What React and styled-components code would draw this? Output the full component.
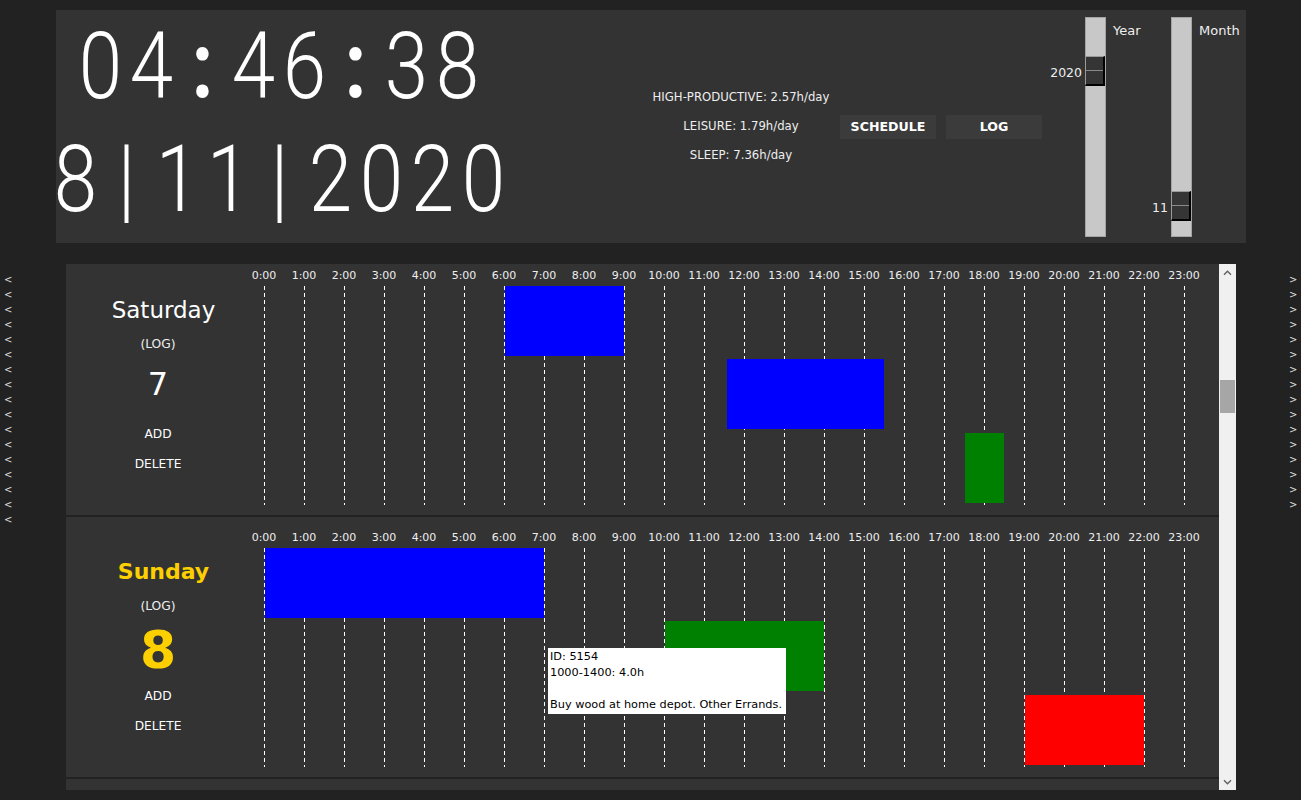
import React, { useLayoutEffect, useRef } from 'react';
import styled, { createGlobalStyle } from 'styled-components';

const GlobalStyle = createGlobalStyle`
  html, body {
    margin: 0;
    padding: 0;
    background: #222;
  }
  body {
    font-family: "DejaVu Sans", Verdana, sans-serif;
    color: #fff;
    overflow: hidden;
  }
`;

const HOUR_W = 40;
const ROW_PITCH = 262;
const VIEW_H = 526;
const SCROLL_TOP = 1581;
const LANES = [31, 104, 178];
const WEEKDAYS = ['Sunday', 'Monday', 'Tuesday', 'Wednesday', 'Thursday', 'Friday', 'Saturday'];

const ENTRIES = {
  7: [
    { start: 6, end: 9, lane: 0, color: '#0000ff' },
    { start: 11.55, end: 15.5, lane: 1, color: '#0000ff' },
    { start: 17.5, end: 18.5, lane: 2, color: '#008000' },
  ],
  8: [
    { start: 0, end: 7, lane: 0, color: '#0000ff' },
    { start: 10, end: 14, lane: 1, color: '#008000' },
    { start: 19, end: 22, lane: 2, color: '#ff0000' },
  ],
};

const TODAY = 8;

const Page = styled.div`
  padding-top: 10px;
  width: 1301px;
  height: 800px;
  box-sizing: border-box;
`;

const TopPanel = styled.div`
  margin-left: 56px;
  width: 1190px;
  height: 233px;
  background: #333;
  display: flex;
`;

const ClockCol = styled.div`
  width: 446px;
  display: flex;
  flex-direction: column;
  align-items: center;
`;

const ClockLine = styled.div`
  display: flex;
  height: 113px;
  font-family: Roboto, "DejaVu Sans", sans-serif;
  font-weight: 300;
  font-size: 92px;
  line-height: 113px;
  color: #fff;
`;

const ClockChar = styled.span`
  display: inline-block;
  width: ${(p) => p.$cell}px;
  text-align: center;
  font-weight: ${(p) => (p.$colon ? 700 : 300)};
  transform: scaleX(0.85);
`;

const StatsCol = styled.div`
  width: 198px;
  margin-left: 140px;
  display: flex;
  flex-direction: column;
  align-items: center;
  justify-content: center;
`;

const Stat = styled.div`
  font-size: 11.7px;
  line-height: 29px;
  color: #eee;
  white-space: nowrap;
`;

const ButtonRow = styled.div`
  align-self: center;
  display: flex;
  gap: 10px;
`;

const Button = styled.button`
  width: 96px;
  height: 24px;
  border: none;
  background: #3b3b3b;
  color: #fff;
  font-family: "DejaVu Sans", Verdana, sans-serif;
  font-weight: bold;
  font-size: 12.6px;
  padding: 0;
`;

const Sliders = styled.div`
  margin-left: 43px;
  display: flex;
  padding-top: 7px;
`;

const SliderUnit = styled.div`
  display: flex;
  width: ${(p) => p.$width}px;
`;

const Track = styled.div`
  position: relative;
  width: 21px;
  height: 220px;
  box-sizing: border-box;
  background: #c8c8c8;
  border: 1px solid #a4a4a4;
`;

const Thumb = styled.div`
  position: absolute;
  left: -1px;
  width: 20px;
  height: 30px;
  box-sizing: border-box;
  background: #353535;
  border-top: 1px solid #9a9a9a;
  border-left: 1px solid #9a9a9a;
  border-right: 2px solid #000;
  border-bottom: 2px solid #000;

  &::after {
    content: '';
    position: absolute;
    left: 0;
    right: 0;
    top: 13px;
    height: 1px;
    background: #8a8a8a;
  }
`;

const ValueLabel = styled.div`
  position: absolute;
  right: calc(100% + 4px);
  top: 15px;
  transform: translateY(-50%);
  font-size: 12.5px;
  color: #eee;
  white-space: nowrap;
`;

const SliderLabel = styled.div`
  margin-left: 7px;
  margin-top: 6px;
  font-size: 13px;
  line-height: 16px;
  color: #eee;
`;

const Lower = styled.div`
  display: flex;
  margin-top: 21px;
  height: ${VIEW_H}px;
`;

const ArrowCol = styled.div`
  flex: ${(p) => (p.$side === 'left' ? '0 0 66px' : '1')};
  padding-top: 8px;
  padding-left: ${(p) => (p.$side === 'left' ? '4px' : '53px')};
  box-sizing: border-box;
  display: flex;
  flex-direction: column;
`;

const Arrow = styled.div`
  font-size: 10px;
  line-height: 15px;
  height: 15px;
  color: #ddd;
`;

const Viewport = styled.div`
  width: 1170px;
  display: flex;
`;

const DayList = styled.div`
  width: 1153px;
  height: ${VIEW_H}px;
  overflow: hidden;
  background: #333;
`;

const Spacer = styled.div`
  flex-shrink: 0;
`;

const Row = styled.div`
  display: flex;
  height: 260px;
  border-bottom: 2px solid #222;
  background: #333;
`;

const DayInfo = styled.div`
  width: 184px;
  flex-shrink: 0;
  display: flex;
  flex-direction: column;
  align-items: center;
  padding-top: 40px;
  box-sizing: border-box;
`;

const DayName = styled.div`
  padding-left: 11px;
  font-size: ${(p) => (p.$today ? '22px' : '23px')};
  font-weight: ${(p) => (p.$today ? 'bold' : 'normal')};
  color: ${(p) => (p.$today ? '#fcd000' : '#fff')};
  line-height: 30px;
  height: 30px;
`;

const SubLabel = styled.div`
  margin-top: 9px;
  font-size: 12.3px;
  line-height: 20px;
  color: #eee;
`;

const DayNum = styled.div`
  height: 60px;
  box-sizing: border-box;
  padding-top: ${(p) => (p.$today ? '8px' : '0')};
  display: flex;
  align-items: center;
  font-size: ${(p) => (p.$today ? '52px' : '32px')};
  font-weight: ${(p) => (p.$today ? 'bold' : 'normal')};
  color: ${(p) => (p.$today ? '#fcd000' : '#fff')};
`;

const Action = styled.div`
  margin-top: 10px;
  font-size: 12.2px;
  line-height: 20px;
  color: #fff;
`;

const Chart = styled.div`
  padding-left: 14px;
`;

const Canvas = styled.div`
  position: relative;
  width: ${24 * HOUR_W}px;
  height: 260px;
`;

const HourLabel = styled.div`
  position: absolute;
  top: 13px;
  width: ${HOUR_W}px;
  text-align: center;
  font-size: 11px;
  line-height: 16px;
  color: #eee;
  white-space: nowrap;
`;

const GridLine = styled.div`
  position: absolute;
  top: 31px;
  width: 1px;
  height: 219px;
  background: repeating-linear-gradient(to bottom, #fff 0 4px, transparent 4px 7px);
`;

const Block = styled.div`
  position: absolute;
  height: 70px;
  background: ${(p) => p.$color};
`;

const Tooltip = styled.div`
  position: absolute;
  left: 284px;
  top: 131px;
  width: 238px;
  height: 66px;
  box-sizing: border-box;
  padding: 1px 2px;
  background: #fff;
  color: #000;
  font-size: 11.3px;
  line-height: 16px;
  white-space: pre;
`;

const ScrollBar = styled.div`
  width: 17px;
  background: #f0f0f0;
  display: flex;
  flex-direction: column;
`;

const ScrollBtn = styled.div`
  height: 17px;
  display: flex;
  align-items: center;
  justify-content: center;
`;

const ScrollTrack = styled.div`
  flex: 1;
`;

const ScrollThumb = styled.div`
  margin: 0 1px;
  background: #a6a6a6;
`;

const Chevron = ({ down }) => (
  <svg width="9" height="6" viewBox="0 0 9 6">
    <path
      d={down ? 'M1 1.2 L4.5 4.7 L8 1.2' : 'M1 4.8 L4.5 1.3 L8 4.8'}
      fill="none"
      stroke="#606060"
      strokeWidth="1.4"
    />
  </svg>
);

const Clock = ({ text, cell }) => (
  <ClockLine>
    {text.split('').map((ch, i) => (
      <ClockChar key={i} $cell={cell} $colon={ch === ':'}>
        {ch}
      </ClockChar>
    ))}
  </ClockLine>
);

const Slider = ({ label, value, min, max, width }) => {
  const top = Math.round(((value - min) / (max - min)) * 190);
  return (
    <SliderUnit $width={width}>
      <Track>
        <Thumb style={{ top }}>
          <ValueLabel>{value}</ValueLabel>
        </Thumb>
      </Track>
      <SliderLabel>{label}</SliderLabel>
    </SliderUnit>
  );
};

const DayRow = ({ day }) => {
  const today = day === TODAY;
  const entries = ENTRIES[day] || [];
  const hours = Array.from({ length: 24 }, (_, h) => h);
  return (
    <Row>
      <DayInfo>
        <DayName $today={today}>{WEEKDAYS[(day - 1) % 7]}</DayName>
        <SubLabel>(LOG)</SubLabel>
        <DayNum $today={today}>{day}</DayNum>
        <Action>ADD</Action>
        <Action>DELETE</Action>
      </DayInfo>
      <Chart>
        <Canvas>
          {hours.map((h) => (
            <HourLabel key={'l' + h} style={{ left: h * HOUR_W - HOUR_W / 2 }}>
              {h}:00
            </HourLabel>
          ))}
          {hours.map((h) => (
            <GridLine key={'g' + h} style={{ left: h * HOUR_W }} />
          ))}
          {entries.map((e, i) => (
            <Block
              key={i}
              $color={e.color}
              style={{
                left: Math.round(e.start * HOUR_W) + 1,
                width: Math.round((e.end - e.start) * HOUR_W) - 1,
                top: LANES[e.lane],
              }}
            />
          ))}
          {today && (
            <Tooltip>{'ID: 5154\n1000-1400: 4.0h\n\nBuy wood at home depot. Other Errands.'}</Tooltip>
          )}
        </Canvas>
      </Chart>
    </Row>
  );
};

const App = () => {
  const listRef = useRef(null);
  const dayCount = 30;

  useLayoutEffect(() => {
    if (listRef.current) listRef.current.scrollTop = SCROLL_TOP;
  }, []);

  // mount only rows whose content shows in the viewport
  const first = Math.floor(SCROLL_TOP / ROW_PITCH);
  const last = Math.min(dayCount - 1, Math.floor((SCROLL_TOP + VIEW_H - 24) / ROW_PITCH));
  const visible = [];
  for (let i = first; i <= last; i++) visible.push(i + 1);

  const total = dayCount * ROW_PITCH;
  const trackH = VIEW_H - 34;
  const thumbH = Math.max(17, Math.round((trackH * VIEW_H) / total));
  const thumbTop = Math.round((SCROLL_TOP / (total - VIEW_H)) * (trackH - thumbH));

  return (
    <Page>
      <GlobalStyle />
      <TopPanel>
        <ClockCol>
          <Clock text="04:46:38" cell={51} />
          <Clock text="8|11|2020" cell={51} />
        </ClockCol>
        <StatsCol>
          <Stat>HIGH-PRODUCTIVE: 2.57h/day</Stat>
          <Stat>LEISURE: 1.79h/day</Stat>
          <Stat>SLEEP: 7.36h/day</Stat>
        </StatsCol>
        <ButtonRow>
          <Button>SCHEDULE</Button>
          <Button>LOG</Button>
        </ButtonRow>
        <Sliders>
          <Slider label="Year" value={2020} min={2018} max={2028} width={86} />
          <Slider label="Month" value={11} min={1} max={12} width={75} />
        </Sliders>
      </TopPanel>
      <Lower>
        <ArrowCol $side="left">
          {Array.from({ length: 17 }, (_, i) => (
            <Arrow key={i}>&lt;</Arrow>
          ))}
        </ArrowCol>
        <Viewport>
          <DayList ref={listRef}>
            <Spacer style={{ height: first * ROW_PITCH }} />
            {visible.map((d) => (
              <DayRow key={d} day={d} />
            ))}
            <Spacer style={{ height: (dayCount - 1 - last) * ROW_PITCH }} />
          </DayList>
          <ScrollBar>
            <ScrollBtn>
              <Chevron />
            </ScrollBtn>
            <ScrollTrack>
              <ScrollThumb style={{ marginTop: thumbTop, height: thumbH }} />
            </ScrollTrack>
            <ScrollBtn>
              <Chevron down />
            </ScrollBtn>
          </ScrollBar>
        </Viewport>
        <ArrowCol $side="right">
          {Array.from({ length: 16 }, (_, i) => (
            <Arrow key={i}>&gt;</Arrow>
          ))}
        </ArrowCol>
      </Lower>
    </Page>
  );
};

export default App;
